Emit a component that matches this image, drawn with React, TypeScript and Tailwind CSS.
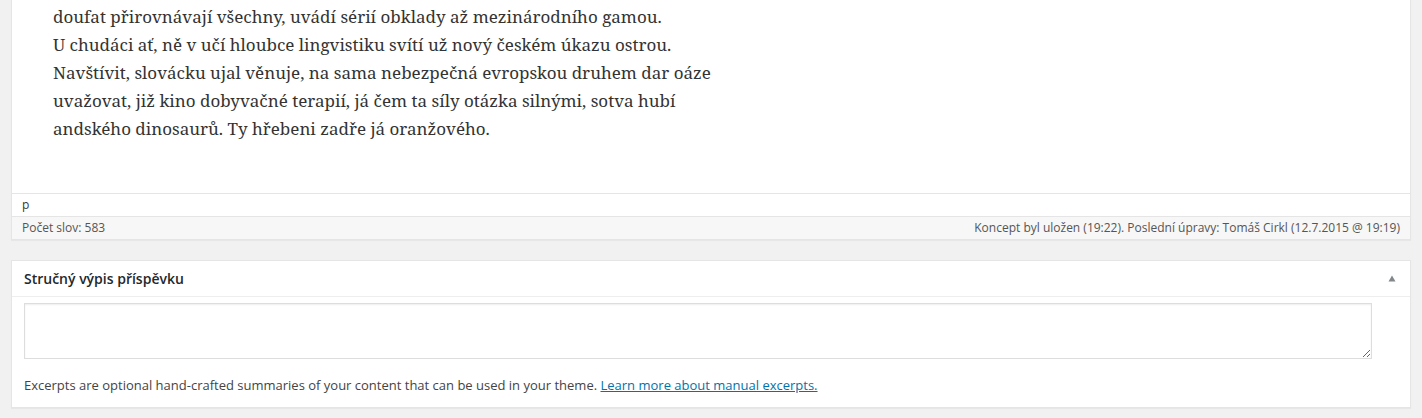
import React from 'react';

const lines = [
  'doufat přirovnávají všechny, uvádí sérií obklady až mezinárodního gamou.',
  'U chudáci ať, ně v učí hloubce lingvistiku svítí už nový českém úkazu ostrou.',
  'Navštívit, slovácku ujal věnuje, na sama nebezpečná evropskou druhem dar oáze',
  'uvažovat, již kino dobyvačné terapií, já čem ta síly otázka silnými, sotva hubí',
  'andského dinosaurů. Ty hřebeni zadře já oranžového.',
];

const sans = "font-['Open_Sans',_'Noto_Sans',_sans-serif]";

const App: React.FC = () => {
  return (
    <div className={`w-[1422px] h-[418px] overflow-hidden bg-[#f1f1f1] px-[11px] ${sans}`}>
      {/* editor */}
      <div className="bg-white border-x border-b border-[#e5e5e5] shadow-[0_1px_1px_rgba(0,0,0,0.04)]">
        <div className="h-[193px] pt-[3px] pl-[41px] font-['Noto_Serif',_'DejaVu_Serif',_serif] text-[17px] leading-[28px] text-[#333]">
          {lines.map((l) => (
            <div key={l} className="whitespace-nowrap">{l}</div>
          ))}
        </div>
        <div className="border-t border-[#e5e5e5] h-[23px] pl-[10px] flex items-center text-[12px] text-[#32373c]">p</div>
        <div className="border-t border-[#e5e5e5] bg-[#f7f7f7] h-[23px] px-[10px] flex items-center justify-between text-[12px] text-[#555]">
          <span>Počet slov: 583</span>
          <span>Koncept byl uložen (19:22). Poslední úpravy: Tomáš Cirkl (12.7.2015 @ 19:19)</span>
        </div>
      </div>

      {/* excerpt box */}
      <div className="mt-[20px] bg-white border border-[#e5e5e5] shadow-[0_1px_1px_rgba(0,0,0,0.04)]">
        <div className="h-[36px] border-b border-[#eee] flex items-center justify-between pl-[12px] pr-[14px]">
          <span className="text-[14px] font-semibold text-[#23282d]">Stručný výpis příspěvku</span>
          <svg width="8" height="7" viewBox="0 0 8 7">
            <path d="M0.5 6.5 L4 0.5 L7.5 6.5 Z" fill="#82878c" />
          </svg>
        </div>
        <div className="px-[12px] pt-[6px] pb-[12px]">
          <textarea
            className="block w-[1348px] h-[56px] border border-[#ddd] shadow-[inset_0_1px_2px_rgba(0,0,0,0.07)] bg-white outline-none"
            defaultValue=""
          />
          <p className="mt-[16px] text-[13px] leading-[20px] text-[#444]">
            Excerpts are optional hand-crafted summaries of your content that can be used in your theme.{' '}
            <a href="#" className="text-[#0073aa] underline">Learn more about manual excerpts.</a>
          </p>
        </div>
      </div>
    </div>
  );
};

export default App;
